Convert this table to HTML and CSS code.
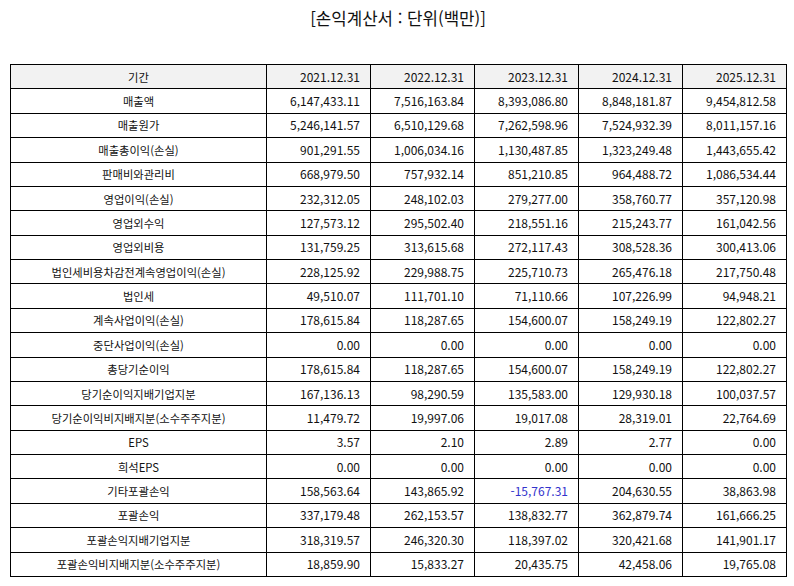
FILE: index.html
```html
<!DOCTYPE html>
<html lang="ko">
<head>
<meta charset="utf-8">
<link rel="stylesheet" href="styles.css">
</head>
<body>
<h1 class="title">[손익계산서 : 단위(백만)]</h1>
<table class="fin">
  <colgroup>
    <col class="c-label"><col class="c-num"><col class="c-num"><col class="c-num"><col class="c-num"><col class="c-num">
  </colgroup>
  <thead>
    <tr><th class="lbl">기간</th><th>2021.12.31</th><th>2022.12.31</th><th>2023.12.31</th><th>2024.12.31</th><th>2025.12.31</th></tr>
  </thead>
  <tbody>
    <tr><td class="lbl">매출액</td><td>6,147,433.11</td><td>7,516,163.84</td><td>8,393,086.80</td><td>8,848,181.87</td><td>9,454,812.58</td></tr>
    <tr><td class="lbl">매출원가</td><td>5,246,141.57</td><td>6,510,129.68</td><td>7,262,598.96</td><td>7,524,932.39</td><td>8,011,157.16</td></tr>
    <tr><td class="lbl">매출총이익(손실)</td><td>901,291.55</td><td>1,006,034.16</td><td>1,130,487.85</td><td>1,323,249.48</td><td>1,443,655.42</td></tr>
    <tr><td class="lbl">판매비와관리비</td><td>668,979.50</td><td>757,932.14</td><td>851,210.85</td><td>964,488.72</td><td>1,086,534.44</td></tr>
    <tr><td class="lbl">영업이익(손실)</td><td>232,312.05</td><td>248,102.03</td><td>279,277.00</td><td>358,760.77</td><td>357,120.98</td></tr>
    <tr><td class="lbl">영업외수익</td><td>127,573.12</td><td>295,502.40</td><td>218,551.16</td><td>215,243.77</td><td>161,042.56</td></tr>
    <tr><td class="lbl">영업외비용</td><td>131,759.25</td><td>313,615.68</td><td>272,117.43</td><td>308,528.36</td><td>300,413.06</td></tr>
    <tr><td class="lbl">법인세비용차감전계속영업이익(손실)</td><td>228,125.92</td><td>229,988.75</td><td>225,710.73</td><td>265,476.18</td><td>217,750.48</td></tr>
    <tr><td class="lbl">법인세</td><td>49,510.07</td><td>111,701.10</td><td>71,110.66</td><td>107,226.99</td><td>94,948.21</td></tr>
    <tr><td class="lbl">계속사업이익(손실)</td><td>178,615.84</td><td>118,287.65</td><td>154,600.07</td><td>158,249.19</td><td>122,802.27</td></tr>
    <tr><td class="lbl">중단사업이익(손실)</td><td>0.00</td><td>0.00</td><td>0.00</td><td>0.00</td><td>0.00</td></tr>
    <tr><td class="lbl">총당기순이익</td><td>178,615.84</td><td>118,287.65</td><td>154,600.07</td><td>158,249.19</td><td>122,802.27</td></tr>
    <tr><td class="lbl">당기순이익지배기업지분</td><td>167,136.13</td><td>98,290.59</td><td>135,583.00</td><td>129,930.18</td><td>100,037.57</td></tr>
    <tr><td class="lbl">당기순이익비지배지분(소수주주지분)</td><td>11,479.72</td><td>19,997.06</td><td>19,017.08</td><td>28,319.01</td><td>22,764.69</td></tr>
    <tr><td class="lbl">EPS</td><td>3.57</td><td>2.10</td><td>2.89</td><td>2.77</td><td>0.00</td></tr>
    <tr><td class="lbl">희석EPS</td><td>0.00</td><td>0.00</td><td>0.00</td><td>0.00</td><td>0.00</td></tr>
    <tr><td class="lbl">기타포괄손익</td><td>158,563.64</td><td>143,865.92</td><td class="neg">-15,767.31</td><td>204,630.55</td><td>38,863.98</td></tr>
    <tr><td class="lbl">포괄손익</td><td>337,179.48</td><td>262,153.57</td><td>138,832.77</td><td>362,879.74</td><td>161,666.25</td></tr>
    <tr><td class="lbl">포괄손익지배기업지분</td><td>318,319.57</td><td>246,320.30</td><td>118,397.02</td><td>320,421.68</td><td>141,901.17</td></tr>
    <tr><td class="lbl">포괄손익비지배지분(소수주주지분)</td><td>18,859.90</td><td>15,833.27</td><td>20,435.75</td><td>42,458.06</td><td>19,765.08</td></tr>
  </tbody>
</table>
</body>
</html>
```

FILE: styles.css
```css
html, body {
  margin: 0;
  padding: 0;
  background: #fff;
}
body {
  padding: 0 8px 0 10px;
  font-family: "Noto Sans CJK KR", "Noto Sans", sans-serif;
  color: #111;
}
.title {
  margin: 0;
  padding-top: 6px;
  height: 64px;
  box-sizing: border-box;
  text-align: center;
  font-size: 16.8px;
  font-weight: normal;
  line-height: 24px;
}
.fin {
  border-collapse: collapse;
  table-layout: fixed;
  width: 776px;
  font-size: 12px;
}
.c-label { width: 256px; }
.c-num { width: 104px; }
.fin tr {
  height: 24.38px;
}
.fin th, .fin td {
  border: 1px solid #000;
  padding: 0 10px 0 4px;
  text-align: right;
  font-weight: normal;
  line-height: 14px;
  white-space: nowrap;
}
.fin th {
  background: #f2f2f2;
}
.fin .lbl {
  text-align: center;
  padding: 0 4px;
  font-size: 11.3px;
}
.fin .neg {
  color: #3333cc;
}
```
